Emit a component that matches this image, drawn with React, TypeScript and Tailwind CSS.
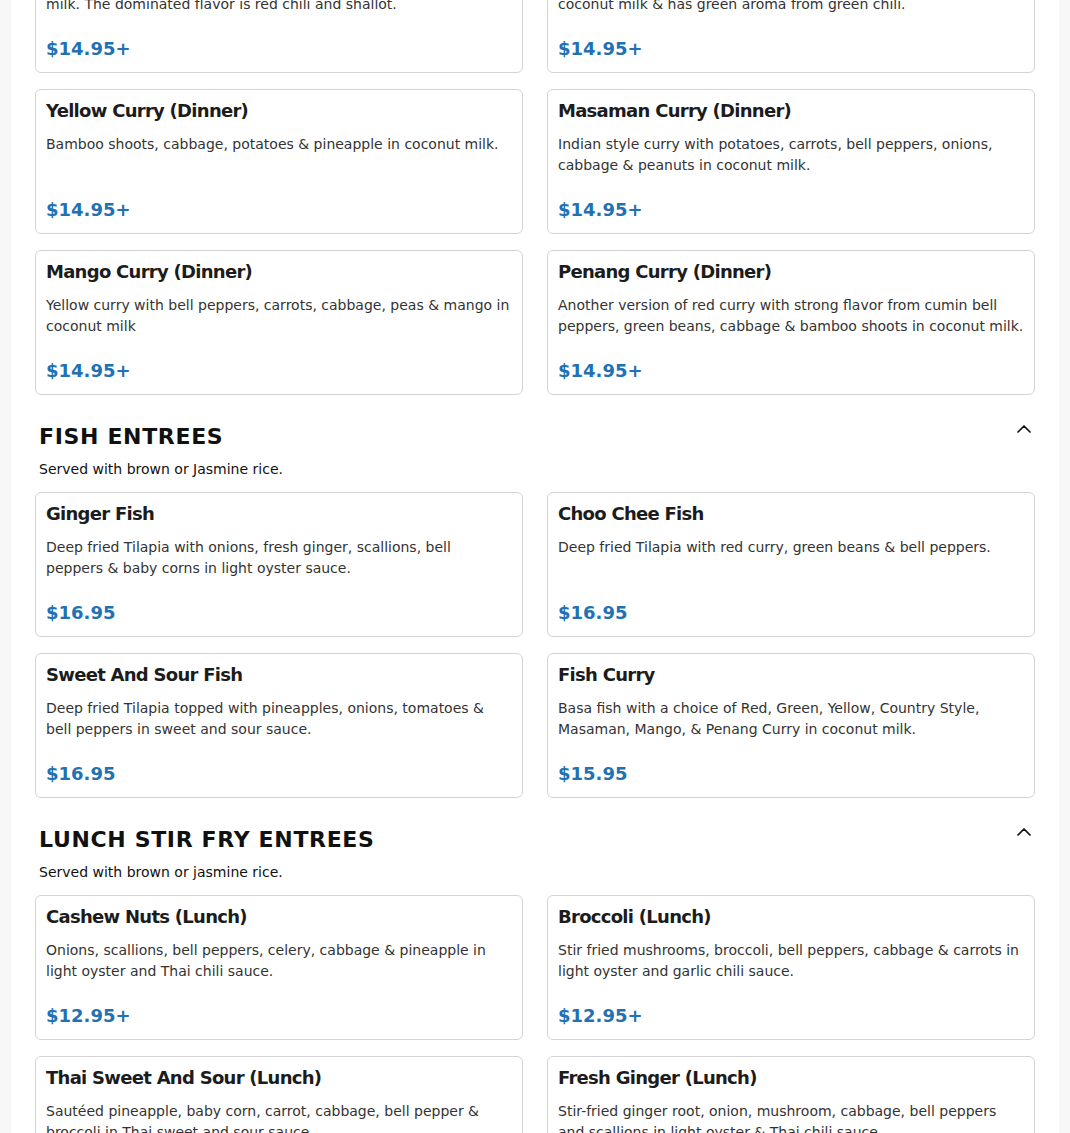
type Dish = { name: string; desc: string; price: string };
type Section = { title?: string; note?: string; dishes: Dish[] };

const SECTIONS: Section[] = [
  {
    dishes: [
      {
        name: 'Red Curry (Dinner)',
        desc: 'Bamboo shoots, bell peppers, green beans, cabbage, zucchini & sweet basil leaves simmered in spicy red curry paste & coconut milk. The dominated flavor is red chili and shallot.',
        price: '$14.95+',
      },
      {
        name: 'Green Curry (Dinner)',
        desc: 'Bamboo shoots, bell peppers, green beans, cabbage, zucchini & sweet basil leaves simmered in a spicy green curry paste with coconut milk & has green aroma from green chili.',
        price: '$14.95+',
      },
      {
        name: 'Yellow Curry (Dinner)',
        desc: 'Bamboo shoots, cabbage, potatoes & pineapple in coconut milk.',
        price: '$14.95+',
      },
      {
        name: 'Masaman Curry (Dinner)',
        desc: 'Indian style curry with potatoes, carrots, bell peppers, onions, cabbage & peanuts in coconut milk.',
        price: '$14.95+',
      },
      {
        name: 'Mango Curry (Dinner)',
        desc: 'Yellow curry with bell peppers, carrots, cabbage, peas & mango in coconut milk',
        price: '$14.95+',
      },
      {
        name: 'Penang Curry (Dinner)',
        desc: 'Another version of red curry with strong flavor from cumin bell peppers, green beans, cabbage & bamboo shoots in coconut milk.',
        price: '$14.95+',
      },
    ],
  },
  {
    title: 'FISH ENTREES',
    note: 'Served with brown or Jasmine rice.',
    dishes: [
      {
        name: 'Ginger Fish',
        desc: 'Deep fried Tilapia with onions, fresh ginger, scallions, bell peppers & baby corns in light oyster sauce.',
        price: '$16.95',
      },
      {
        name: 'Choo Chee Fish',
        desc: 'Deep fried Tilapia with red curry, green beans & bell peppers.',
        price: '$16.95',
      },
      {
        name: 'Sweet And Sour Fish',
        desc: 'Deep fried Tilapia topped with pineapples, onions, tomatoes & bell peppers in sweet and sour sauce.',
        price: '$16.95',
      },
      {
        name: 'Fish Curry',
        desc: 'Basa fish with a choice of Red, Green, Yellow, Country Style, Masaman, Mango, & Penang Curry in coconut milk.',
        price: '$15.95',
      },
    ],
  },
  {
    title: 'LUNCH STIR FRY ENTREES',
    note: 'Served with brown or jasmine rice.',
    dishes: [
      {
        name: 'Cashew Nuts (Lunch)',
        desc: 'Onions, scallions, bell peppers, celery, cabbage & pineapple in light oyster and Thai chili sauce.',
        price: '$12.95+',
      },
      {
        name: 'Broccoli (Lunch)',
        desc: 'Stir fried mushrooms, broccoli, bell peppers, cabbage & carrots in light oyster and garlic chili sauce.',
        price: '$12.95+',
      },
      {
        name: 'Thai Sweet And Sour (Lunch)',
        desc: 'Sautéed pineapple, baby corn, carrot, cabbage, bell pepper & broccoli in Thai sweet and sour sauce.',
        price: '$12.95+',
      },
      {
        name: 'Fresh Ginger (Lunch)',
        desc: 'Stir-fried ginger root, onion, mushroom, cabbage, bell peppers and scallions in light oyster & Thai chili sauce.',
        price: '$12.95+',
      },
    ],
  },
];

function ChevronUp() {
  return (
    <svg width="14" height="8" viewBox="0 0 14 8" className="mt-1 shrink-0" fill="none">
      <polyline points="1,7 7,1 13,7" stroke="#111" strokeWidth="1.7" strokeLinecap="round" strokeLinejoin="round" />
    </svg>
  );
}

function DishCard({ dish }: { dish: Dish }) {
  return (
    <div className="flex flex-col rounded-md border border-[#d4d4d4] bg-white p-2.5">
      <h3 className="text-[18px] font-bold leading-[21px] tracking-[-0.04em] text-[#1c1c1c]">{dish.name}</h3>
      <p className="mt-[13px] min-h-[42px] text-[14px] leading-[21px] text-[#333]">{dish.desc}</p>
      <div className="mt-auto pt-[20px] text-[18px] font-bold leading-[27px] text-[#2271b3]">{dish.price}</div>
    </div>
  );
}

export default function App() {
  return (
    <div className="min-h-screen bg-[#f7f7f7]" style={{ fontFamily: '"DejaVu Sans", "Noto Sans", sans-serif' }}>
      <div className="mx-auto w-[1048px] bg-white px-6 pb-10">
        {SECTIONS.map((section, i) => (
          <div key={i} className={i === 0 ? '-mt-[93px]' : 'mt-[26px]'}>
            {section.title && (
              <>
                <div className="flex items-start justify-between px-1">
                  <h2 className="text-[22px] font-bold leading-8 tracking-[0.03em] text-[#111]">{section.title}</h2>
                  <ChevronUp />
                </div>
                <p className="mt-1.5 px-1 text-[14px] leading-5 text-[#111]">{section.note}</p>
              </>
            )}
            <div className={`grid grid-cols-2 gap-x-6 gap-y-4 ${section.title ? 'mt-[13px]' : ''}`}>
              {section.dishes.map((dish) => (
                <DishCard key={dish.name} dish={dish} />
              ))}
            </div>
          </div>
        ))}
      </div>
    </div>
  );
}
